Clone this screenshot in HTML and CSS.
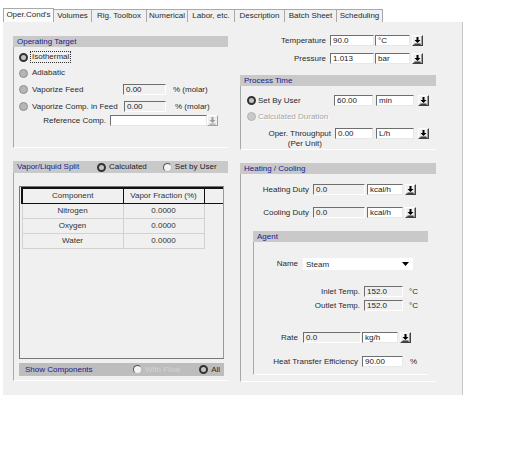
FILE: index.html
```html
<!DOCTYPE html>
<html>
<head>
<meta charset="utf-8">
<link rel="stylesheet" href="styles.css">
</head>
<body>
<div class="win">
  <div class="tabs">
    <div class="tab active t1">Oper.Cond's</div>
    <div class="tab t2">Volumes</div>
    <div class="tab t3">Rig. Toolbox</div>
    <div class="tab t4">Numerical</div>
    <div class="tab t5">Labor, etc.</div>
    <div class="tab t6">Description</div>
    <div class="tab t7">Batch Sheet</div>
    <div class="tab t8">Scheduling</div>
  </div>
  <div class="panel">
    <div class="col left">
      <section class="group optarget">
        <div class="bar">Operating Target</div>
        <div class="gbody">
          <div class="orow h16"><span class="radio sel"></span><span class="lbl focus">Isothermal</span></div>
          <div class="orow h16"><span class="radio off"></span><span class="lbl">Adiabatic</span></div>
          <div class="orow h17"><span class="radio off"></span><span class="lbl w91">Vaporize Feed</span><span class="field dis w43">0.00</span><span class="unit-txt m7">% (molar)</span></div>
          <div class="orow h17"><span class="radio off"></span><span class="lbl w92">Vaporize Comp. in Feed</span><span class="field dis w42">0.00</span><span class="unit-txt m9">% (molar)</span></div>
          <div class="orow refrow"><span class="rlbl">Reference Comp.</span><span class="field w97"></span><span class="btn disabled"><svg viewBox="0 0 9 9" width="9" height="9"><path d="M3.5 1h2v3h2l-3 3-3-3h2z" fill="#9a9a9a"/><rect x="1.5" y="7.6" width="6" height="1" fill="#9a9a9a"/></svg></span></div>
        </div>
      </section>

      <section class="group vl">
        <div class="bar vlbar">
          <span class="bt">Vapor/Liquid Split</span>
          <span class="radio sel r-calc"></span><span class="lbl">Calculated</span>
          <span class="radio open r-user"></span><span class="lbl">Set by User</span>
        </div>
        <div class="gbody vlbody">
          <div class="frame">
            <table class="grid">
              <thead>
                <tr><th class="c1">Component</th><th class="c2">Vapor Fraction (%)</th><th class="c3"></th></tr>
              </thead>
              <tbody>
                <tr><td class="c1">Nitrogen</td><td class="c2">0.0000</td><td class="c3"></td></tr>
                <tr><td class="c1">Oxygen</td><td class="c2">0.0000</td><td class="c3"></td></tr>
                <tr><td class="c1">Water</td><td class="c2">0.0000</td><td class="c3"></td></tr>
              </tbody>
            </table>
          </div>
          <div class="showbar">
            <span class="bt">Show Components</span>
            <span class="radio open r-flow"></span><span class="lbl distxt">With Flow</span>
            <span class="radio sel r-all"></span><span class="lbl">All</span>
          </div>
        </div>
      </section>
    </div>

    <div class="col right">
      <div class="trow first">
        <span class="tlabel">Temperature</span><span class="field w44">90.0</span><span class="field unit w35">°C</span><span class="btn"><svg viewBox="0 0 9 9" width="9" height="9"><path d="M3.5 1h2v3h2l-3 3-3-3h2z" fill="#000"/><rect x="1.5" y="7.6" width="6" height="1" fill="#000"/></svg></span>
      </div>
      <div class="trow second">
        <span class="tlabel">Pressure</span><span class="field w44">1.013</span><span class="field unit w35">bar</span><span class="btn"><svg viewBox="0 0 9 9" width="9" height="9"><path d="M3.5 1h2v3h2l-3 3-3-3h2z" fill="#000"/><rect x="1.5" y="7.6" width="6" height="1" fill="#000"/></svg></span>
      </div>

      <section class="group ptime">
        <div class="bar">Process Time</div>
        <div class="gbody pbody">
          <div class="prow p1">
            <span class="pradio"><span class="radio sel"></span><span class="lbl">Set By User</span></span>
            <span class="field w39">60.00</span><span class="field unit w38">min</span><span class="btn"><svg viewBox="0 0 9 9" width="9" height="9"><path d="M3.5 1h2v3h2l-3 3-3-3h2z" fill="#000"/><rect x="1.5" y="7.6" width="6" height="1" fill="#000"/></svg></span>
          </div>
          <div class="prow p2">
            <span class="pradio"><span class="radio dis"></span><span class="lbl distxt">Calculated Duration</span></span>
          </div>
          <div class="prow p3">
            <span class="plabel">Oper. Throughput</span>
            <span class="field w38">0.00</span><span class="field unit w38">L/h</span><span class="btn"><svg viewBox="0 0 9 9" width="9" height="9"><path d="M3.5 1h2v3h2l-3 3-3-3h2z" fill="#000"/><rect x="1.5" y="7.6" width="6" height="1" fill="#000"/></svg></span>
          </div>
          <div class="perunit">(Per Unit)</div>
        </div>
      </section>

      <section class="group hc">
        <div class="bar">Heating / Cooling</div>
        <div class="gbody hcbody">
          <div class="hrow h1">
            <span class="hlabel">Heating Duty</span><span class="field dis w52">0.0</span><span class="field unit w36">kcal/h</span><span class="btn"><svg viewBox="0 0 9 9" width="9" height="9"><path d="M3.5 1h2v3h2l-3 3-3-3h2z" fill="#000"/><rect x="1.5" y="7.6" width="6" height="1" fill="#000"/></svg></span>
          </div>
          <div class="hrow h2">
            <span class="hlabel">Cooling Duty</span><span class="field dis w52">0.0</span><span class="field unit w36">kcal/h</span><span class="btn"><svg viewBox="0 0 9 9" width="9" height="9"><path d="M3.5 1h2v3h2l-3 3-3-3h2z" fill="#000"/><rect x="1.5" y="7.6" width="6" height="1" fill="#000"/></svg></span>
          </div>

          <section class="group agent">
            <div class="bar">Agent</div>
            <div class="gbody abody">
              <div class="arow a-name">
                <span class="alabel w44l">Name</span>
                <span class="combo">Steam<svg class="carr" viewBox="0 0 7 4" width="7" height="4"><path d="M0 0h7L3.5 4z" fill="#000"/></svg></span>
              </div>
              <div class="arow a-in">
                <span class="alabel w107">Inlet Temp.</span><span class="field dis w39">152.0</span><span class="unit-txt m6">°C</span>
              </div>
              <div class="arow a-out">
                <span class="alabel w107">Outlet Temp.</span><span class="field dis w39">152.0</span><span class="unit-txt m6">°C</span>
              </div>
              <div class="arow a-rate">
                <span class="alabel w44l">Rate</span><span class="field dis w58">0.0</span><span class="field unit w36 ml1">kg/h</span><span class="btn"><svg viewBox="0 0 9 9" width="9" height="9"><path d="M3.5 1h2v3h2l-3 3-3-3h2z" fill="#000"/><rect x="1.5" y="7.6" width="6" height="1" fill="#000"/></svg></span>
              </div>
              <div class="arow a-hte">
                <span class="alabel w105">Heat Transfer Efficiency</span><span class="field w41">90.00</span><span class="unit-txt m7">%</span>
              </div>
            </div>
          </section>
        </div>
      </section>
    </div>
  </div>
</div>
</body>
</html>
```

FILE: styles.css
```css
* { box-sizing: border-box; margin: 0; padding: 0; }

body {
  background: #fff;
  font-family: "Liberation Sans", Arial, sans-serif;
  font-size: 8px;
  line-height: 10px;
  color: #2a2a2a;
  width: 506px;
  height: 454px;
  overflow: hidden;
}

.win { padding: 8px 0 0 3px; }

/* tabs */
.tabs { display: flex; align-items: flex-end; height: 14px; }
.tab {
  height: 13px;
  line-height: 12px;
  text-align: center;
  background: #f0f0f0;
  border: 1px solid #a9a9a9;
  border-left: none;
  border-bottom: none;
  color: #2a2a2a;
  white-space: nowrap;
}
.tab.active { height: 14px; background: #fbfbfb; border-left: 1px solid #a9a9a9; }
.t1 { width: 51px; }
.t2 { width: 38px; }
.t3 { width: 55px; }
.t4 { width: 41px; }
.t5 { width: 47px; }
.t6 { width: 50px; }
.t7 { width: 52px; }
.t8 { width: 46px; }

/* panel */
.panel {
  width: 460px;
  height: 373px;
  background: #f0f0f0;
  border-right: 1px solid #c8c8c8;
  display: flex;
  padding: 14px 0 0 10px;
}
.col.left { width: 215px; display: flex; flex-direction: column; }
.col.right { width: 196px; margin-left: 12px; display: flex; flex-direction: column; margin-top: -1px; }

.bar {
  height: 11px;
  line-height: 11px;
  background: #c9c9c9;
  color: #20208a;
  padding-left: 4px;
  white-space: nowrap;
}
.gbody {
  border-left: 1px solid #a8a8a8;
  border-bottom: 1px solid #fff;
}

/* operating target */
.optarget .gbody { height: 101px; padding-top: 2px; }
.orow { display: flex; align-items: center; padding-left: 5px; }
.h16 { height: 16px; }
.h17 { height: 17px; }
.orow .lbl { margin-left: 4px; }
.focus { outline: 1px dotted #333; outline-offset: 0; padding: 0 1px; margin-left: 3px !important; }
.w91 { width: 91px; }
.w92 { width: 92px; }
.refrow { height: 13px; margin-top: -1px; }
.rlbl { width: 87px; text-align: right; margin-right: 4px; }

/* radios */
.radio { width: 9px; height: 9px; border-radius: 50%; flex: none; display: inline-block; }
.radio.sel { border: 2.5px solid #333; background: #c4c4c4; }
.radio.off { border: 1px solid #8f8f8f; background: #b5b5b5; }
.radio.open { border: 1px solid #555; border-right-color: #bbb; border-bottom-color: #bbb; background: #f4f4f4; }
.radio.dis { border: 1px solid #b4b4b4; background: #cacaca; }
.distxt { color: #a6a6a6; text-shadow: 1px 1px 0 #fff; }

/* fields */
.field {
  display: inline-block;
  height: 11px;
  line-height: 9px;
  padding-left: 2px;
  background: #fff;
  border-top: 1px solid #6e6e6e;
  border-left: 1px solid #6e6e6e;
  border-right: 1px solid #e8e8e8;
  border-bottom: 1px solid #e8e8e8;
  color: #222;
  flex: none;
  white-space: nowrap;
}
.field.dis { background: #f0f0f0; border-right-color: #fff; border-bottom-color: #fff; }
.unit-txt { white-space: nowrap; }
.m6 { margin-left: 6px; }
.m7 { margin-left: 7px; }
.m9 { margin-left: 9px; }
.ml1 { margin-left: 1px; }
.w35 { width: 35px; } .w36 { width: 36px; } .w38 { width: 38px; } .w39 { width: 39px; }
.w41 { width: 41px; } .w42 { width: 42px; } .w43 { width: 43px; } .w44 { width: 44px; }
.w52 { width: 52px; } .w58 { width: 58px; } .w97 { width: 97px; }

.btn {
  width: 11px;
  height: 11px;
  flex: none;
  display: inline-flex;
  align-items: center;
  justify-content: center;
  background: #f0f0f0;
  border-top: 1px solid #fff;
  border-left: 1px solid #fff;
  border-right: 1px solid #404040;
  border-bottom: 1px solid #404040;
  box-shadow: inset -1px -1px 0 #a0a0a0;
}
.btn.disabled { border-right-color: #a0a0a0; border-bottom-color: #a0a0a0; box-shadow: none; }
.btn svg { display: block; }

/* vapor/liquid */
.vl { margin-top: 13px; }
.vlbar { height: 12px; line-height: 12px; display: flex; align-items: center; }
.vlbar .bt { width: 80px; }
.vlbar .lbl { margin-left: 3px; color: #222; }
.r-user { margin-left: 16px; }
.vlbody { height: 208px; padding: 13px 0 0 5px; border-bottom: 1px solid #fff; }
.frame {
  width: 205px;
  height: 173px;
  border: 1px solid #777;
  border-right-color: #999;
  padding: 0 1px;
}
.grid { border-collapse: collapse; width: 201px; table-layout: fixed; }
.grid th, .grid td { font-weight: normal; text-align: center; padding: 0; color: #333; }
.grid th { height: 15px; border-top: 2px solid #111; border-bottom: 1px solid #111; border-right: 1px solid #111; }
.grid th.c1 { border-left: 2px solid #111; }
.grid th.c3 { border-right: none; }
.grid td { height: 15px; border-bottom: 1px solid #d2d2d2; border-right: 1px solid #d2d2d2; }
.grid td.c1 { border-left: 1px solid #d2d2d2; }
.grid td.c3 { border: none; }
.c1 { width: 101px; }
.c2 { width: 81px; }
.c3 { width: 19px; }

.showbar {
  margin-top: 4px;
  width: 205px;
  height: 13px;
  background: #bdbdbd;
  display: flex;
  align-items: center;
  padding-left: 6px;
}
.showbar .bt { color: #20208a; width: 108px; }
.showbar .lbl { margin-left: 3px; }
.showbar .distxt { color: #d4d4d4; text-shadow: none; }
.r-all { margin-left: 19px; }

/* right column */
.trow { display: flex; align-items: center; height: 11px; }
.trow.first { margin-top: 0; }
.trow.second { margin-top: 7px; }
.tlabel { width: 86px; text-align: right; margin-right: 4px; }
.trow .unit { margin-left: 1px; }
.trow .btn { margin-left: 2px; }

.ptime { margin-top: 11px; }
.pbody { height: 64px; padding-top: 9px; }
.prow { display: flex; align-items: center; height: 11px; }
.pradio { width: 93px; display: flex; align-items: center; padding-left: 6px; }
.pradio .lbl { margin-left: 2px; }
.p2 { margin-top: 5px; }
.p3 { margin-top: 6px; }
.prow .unit { margin-left: 3px; }
.prow .btn { margin-left: 4px; }
.plabel { width: 90px; text-align: right; margin-right: 4px; }
.perunit { width: 81px; text-align: right; height: 10px; line-height: 10px; }

.hc { margin-top: 13px; }
.hcbody { height: 208px; padding: 10px 0 0 12px; }
.hrow { display: flex; align-items: center; height: 11px; margin-left: -12px; }
.h2 { margin-top: 12px; }
.hlabel { width: 68px; text-align: right; margin-right: 4px; }
.hrow .unit { margin-left: 2px; }
.hrow .btn { margin-left: 2px; }

.agent { margin-top: 13px; width: 175px; }
.abody { height: 133px; padding-top: 16px; }
.arow { display: flex; align-items: center; height: 11px; }
.alabel { text-align: right; margin-right: 4px; flex: none; white-space: nowrap; }
.w44l { width: 44px; margin-right: 5px; }
.w107 { width: 106px; }
.w105 { width: 104px; }
.a-name { height: 12px; }
.a-in { margin-top: 16px; }
.a-out { margin-top: 3px; }
.a-rate { margin-top: 21px; }
.a-rate .btn { margin-left: 2px; }
.a-hte { margin-top: 13px; }
.combo {
  width: 110px;
  height: 12px;
  line-height: 11px;
  background: #fff;
  padding-left: 3px;
  display: flex;
  align-items: center;
  justify-content: space-between;
  padding-right: 4px;
}
.carr { display: block; }
```
